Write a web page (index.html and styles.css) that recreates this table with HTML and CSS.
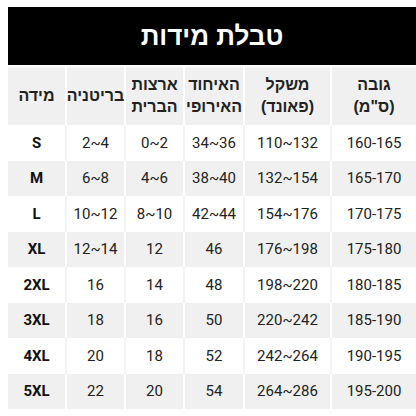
FILE: index.html
```html
<!DOCTYPE html>
<html lang="he" dir="rtl">
<head>
<meta charset="utf-8">
<title>טבלת מידות</title>
<link rel="stylesheet" href="styles.css">
</head>
<body>
<div class="chart">
  <div class="title">טבלת מידות</div>
  <div class="row head">
    <div class="cell">גובה<br>(ס"מ)</div>
    <div class="cell">משקל<br>(פאונד)</div>
    <div class="cell">האיחוד<br>האירופי</div>
    <div class="cell">ארצות<br>הברית</div>
    <div class="cell">בריטניה</div>
    <div class="cell">מידה</div>
  </div>
  <div class="row light"><div class="cell">160-165</div><div class="cell">110~132</div><div class="cell">34~36</div><div class="cell">0~2</div><div class="cell">2~4</div><div class="cell size">S</div></div>
  <div class="row grey"><div class="cell">165-170</div><div class="cell">132~154</div><div class="cell">38~40</div><div class="cell">4~6</div><div class="cell">6~8</div><div class="cell size">M</div></div>
  <div class="row light"><div class="cell">170-175</div><div class="cell">154~176</div><div class="cell">42~44</div><div class="cell">8~10</div><div class="cell">10~12</div><div class="cell size">L</div></div>
  <div class="row grey"><div class="cell">175-180</div><div class="cell">176~198</div><div class="cell">46</div><div class="cell">12</div><div class="cell">12~14</div><div class="cell size">XL</div></div>
  <div class="row light"><div class="cell">180-185</div><div class="cell">198~220</div><div class="cell">48</div><div class="cell">14</div><div class="cell">16</div><div class="cell size">2XL</div></div>
  <div class="row grey"><div class="cell">185-190</div><div class="cell">220~242</div><div class="cell">50</div><div class="cell">16</div><div class="cell">18</div><div class="cell size">3XL</div></div>
  <div class="row light"><div class="cell">190-195</div><div class="cell">242~264</div><div class="cell">52</div><div class="cell">18</div><div class="cell">20</div><div class="cell size">4XL</div></div>
  <div class="row grey"><div class="cell">195-200</div><div class="cell">264~286</div><div class="cell">54</div><div class="cell">20</div><div class="cell">22</div><div class="cell size">5XL</div></div>
</div>
</body>
</html>
```
FILE: styles.css
```css
html, body {
  margin: 0;
  padding: 0;
  background: #fff;
}
body {
  font-family: Roboto, "Liberation Sans", sans-serif;
  color: #222;
}
.chart {
  width: 408px;
  margin: 7px 0 0 4px;
  display: flex;
  flex-direction: column;
}
.title {
  height: 58px;
  background: #000;
  color: #fff;
  font-family: "Liberation Sans", sans-serif;
  font-weight: bold;
  font-size: 26px;
  display: flex;
  align-items: center;
  justify-content: center;
  margin-bottom: 2px;
}
.row {
  display: grid;
  grid-template-columns: 84px 85px 58px 57px 57px 57px;
  column-gap: 2px;
  height: 35.5px;
}
.row.head {
  height: 58px;
  background: #fff;
}
.row.light {
  background: #f3f3f3;
}
.row.grey {
  background: #fff;
}
.cell {
  display: flex;
  align-items: center;
  justify-content: center;
  text-align: center;
  font-size: 15px;
}
.light .cell,
.grey .cell {
  direction: ltr;
  unicode-bidi: isolate;
}
.head .cell {
  background: #f0f0f0;
  font-family: "Liberation Sans", sans-serif;
  font-weight: bold;
  font-size: 16px;
  line-height: 22px;
  color: #222;
}
.light .cell {
  background: #fff;
}
.grey .cell {
  background: #f0f0f0;
}
.cell.size {
  font-weight: bold;
  color: #111;
}
```
